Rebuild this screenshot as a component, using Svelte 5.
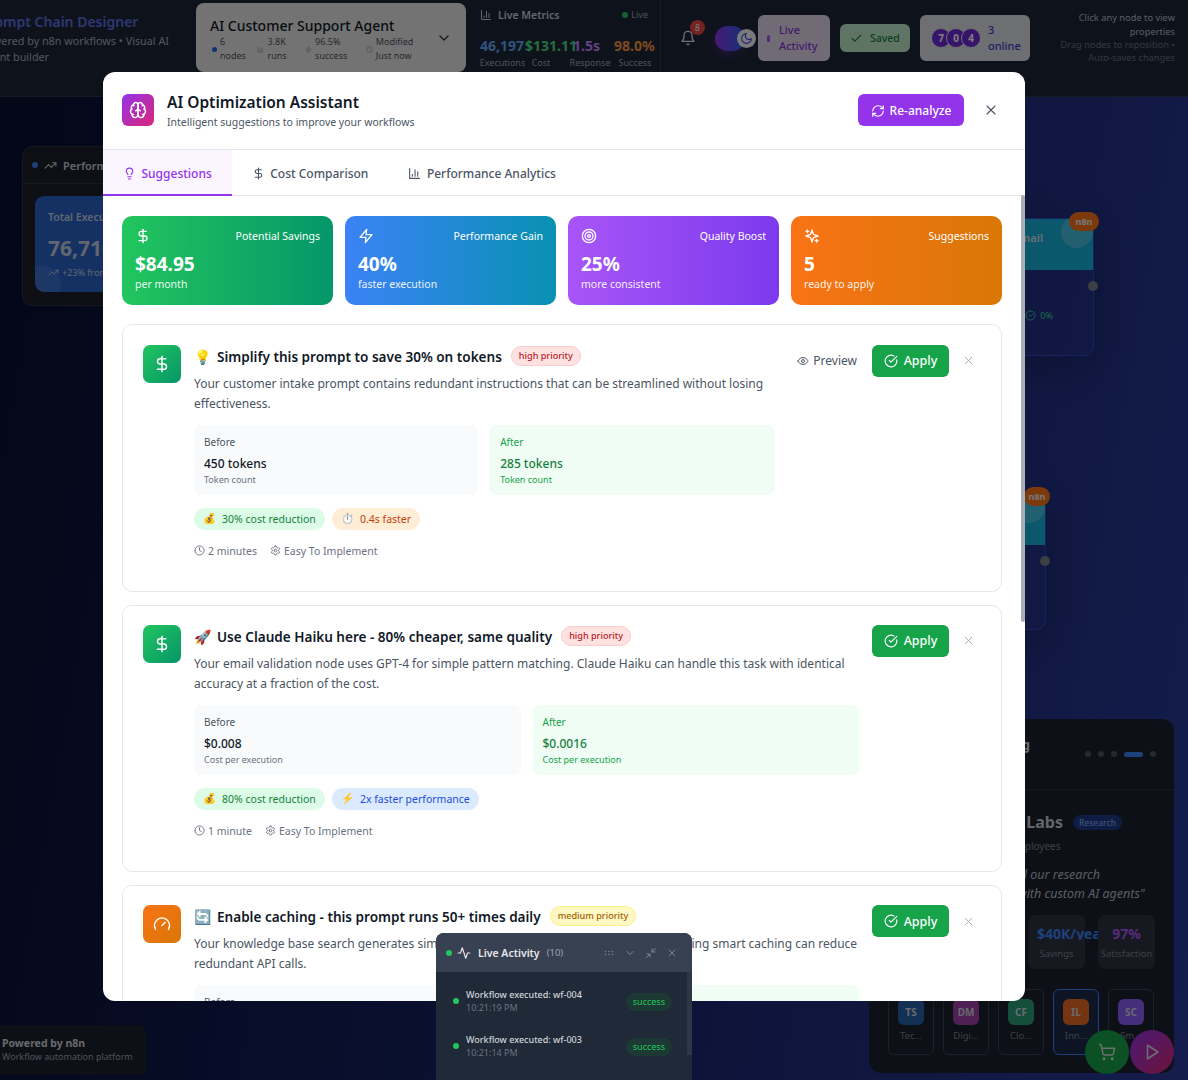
<script>
  const circle = (cx, cy, r) => `M${cx - r} ${cy}a${r} ${r} 0 1 0 ${r * 2} 0a${r} ${r} 0 1 0 ${-r * 2} 0`

  const icons = {
    brain: ['M12 5a3 3 0 1 0-5.997.125 4 4 0 0 0-2.526 5.77 4 4 0 0 0 .556 6.588A4 4 0 1 0 12 18Z', 'M12 5a3 3 0 1 1 5.997.125 4 4 0 0 1 2.526 5.77 4 4 0 0 1-.556 6.588A4 4 0 1 1 12 18Z', 'M15 13a4.5 4.5 0 0 1-3-4 4.5 4.5 0 0 1-3 4', 'M17.599 6.5a3 3 0 0 0 .399-1.375', 'M6.003 5.125A3 3 0 0 0 6.401 6.5', 'M3.477 10.896a4 4 0 0 1 .585-.396', 'M19.938 10.5a4 4 0 0 1 .585.396', 'M6 18a4 4 0 0 1-1.967-.516', 'M19.967 17.484A4 4 0 0 1 18 18'],
    bulb: ['M15 14c.2-1 .7-1.7 1.5-2.5 1-.9 1.5-2.2 1.5-3.5A6 6 0 0 0 6 8c0 1 .2 2.2 1.5 3.5.7.7 1.3 1.5 1.5 2.5', 'M9 18h6', 'M10 22h4'],
    dollar: ['M12 2v20', 'M17 5H9.5a3.5 3.5 0 0 0 0 7h5a3.5 3.5 0 0 1 0 7H6'],
    chart: ['M3 3v18h18', 'M18 17V9', 'M13 17V5', 'M8 17v-3'],
    refresh: ['M3 12a9 9 0 0 1 9-9 9.75 9.75 0 0 1 6.74 2.74L21 8', 'M21 3v5h-5', 'M21 12a9 9 0 0 1-9 9 9.75 9.75 0 0 1-6.74-2.74L3 16', 'M8 16H3v5'],
    x: ['M18 6 6 18', 'm6 6 12 12'],
    zap: ['M13 2 3 14h9l-1 8 10-12h-9l1-8z'],
    target: [circle(12, 12, 10), circle(12, 12, 6), circle(12, 12, 2)],
    sparkles: ['m12 3-1.912 5.813a2 2 0 0 1-1.275 1.275L3 12l5.813 1.912a2 2 0 0 1 1.275 1.275L12 21l1.912-5.813a2 2 0 0 1 1.275-1.275L21 12l-5.813-1.912a2 2 0 0 1-1.275-1.275L12 3Z', 'M5 3v4', 'M19 17v4', 'M3 5h4', 'M17 19h4'],
    eye: ['M2 12s3-7 10-7 10 7 10 7-3 7-10 7-10-7-10-7Z', circle(12, 12, 3)],
    checkCircle: ['M21.801 10A10 10 0 1 1 17 3.335', 'm9 11 3 3L22 4'],
    clock: [circle(12, 12, 10), 'M12 6v6l4 2'],
    gear: ['M12.22 2h-.44a2 2 0 0 0-2 2v.18a2 2 0 0 1-1 1.73l-.43.25a2 2 0 0 1-2 0l-.15-.08a2 2 0 0 0-2.73.73l-.22.38a2 2 0 0 0 .73 2.73l.15.1a2 2 0 0 1 1 1.72v.51a2 2 0 0 1-1 1.74l-.15.09a2 2 0 0 0-.73 2.73l.22.38a2 2 0 0 0 2.73.73l.15-.08a2 2 0 0 1 2 0l.43.25a2 2 0 0 1 1 1.73V20a2 2 0 0 0 2 2h.44a2 2 0 0 0 2-2v-.18a2 2 0 0 1 1-1.73l.43-.25a2 2 0 0 1 2 0l.15.08a2 2 0 0 0 2.73-.73l.22-.39a2 2 0 0 0-.73-2.73l-.15-.08a2 2 0 0 1-1-1.74v-.5a2 2 0 0 1 1-1.74l.15-.09a2 2 0 0 0 .73-2.73l-.22-.38a2 2 0 0 0-2.73-.73l-.15.08a2 2 0 0 1-2 0l-.43-.25a2 2 0 0 1-1-1.73V4a2 2 0 0 0-2-2z', circle(12, 12, 3)],
    gauge: ['m12 14 4-4', 'M3.34 19a10 10 0 1 1 17.32 0'],
    activity: ['M22 12h-4l-3 9L9 3l-3 9H2'],
    bell: ['M6 8a6 6 0 0 1 12 0c0 7 3 9 3 9H3s3-2 3-9', 'M10.3 21a1.94 1.94 0 0 0 3.4 0'],
    moon: ['M12 3a6 6 0 0 0 9 9 9 9 0 1 1-9-9Z'],
    check: ['M20 6 9 17l-5-5'],
    chevron: ['m6 9 6 6 6-6'],
    trending: ['M22 7l-8.5 8.5-5-5L2 17', 'M16 7h6v6'],
    cart: [circle(8, 21, 1), circle(19, 21, 1), 'M2.05 2.05h2l2.66 12.42a2 2 0 0 0 2 1.58h9.78a2 2 0 0 0 1.95-1.57l1.65-7.43H5.12'],
    play: ['M6 3l14 9-14 9z'],
    shrink: ['M4 14h6v6', 'M20 10h-6V4', 'm14 10 7-7', 'm3 21 7-7'],
    grip: ['M5 9h.01', 'M12 9h.01', 'M19 9h.01', 'M5 15h.01', 'M12 15h.01', 'M19 15h.01']
  }

  const summary = [
    { cls: 'green', icon: 'dollar', label: 'Potential Savings', value: '$84.95', sub: 'per month' },
    { cls: 'blue', icon: 'zap', label: 'Performance Gain', value: '40%', sub: 'faster execution' },
    { cls: 'purple', icon: 'target', label: 'Quality Boost', value: '25%', sub: 'more consistent' },
    { cls: 'orange', icon: 'sparkles', label: 'Suggestions', value: '5', sub: 'ready to apply' }
  ]

  const suggestions = [
    {
      icon: 'dollar', tone: 'green', emoji: '💡', title: 'Simplify this prompt to save 30% on tokens', priority: 'high',
      text: 'Your customer intake prompt contains redundant instructions that can be streamlined without losing effectiveness.',
      preview: true, before: '450 tokens', after: '285 tokens', note: 'Token count',
      tags: [{ cls: 'tg', emoji: '💰', text: '30% cost reduction' }, { cls: 'to', emoji: '⏱️', text: '0.4s faster' }],
      time: '2 minutes'
    },
    {
      icon: 'dollar', tone: 'green', emoji: '🚀', title: 'Use Claude Haiku here - 80% cheaper, same quality', priority: 'high',
      text: 'Your email validation node uses GPT-4 for simple pattern matching. Claude Haiku can handle this task with identical accuracy at a fraction of the cost.',
      before: '$0.008', after: '$0.0016', note: 'Cost per execution',
      tags: [{ cls: 'tg', emoji: '💰', text: '80% cost reduction' }, { cls: 'tb', emoji: '⚡', text: '2x faster performance' }],
      time: '1 minute'
    },
    {
      icon: 'gauge', tone: 'orange', emoji: '🔄', title: 'Enable caching - this prompt runs 50+ times daily', priority: 'medium',
      text: 'Your knowledge base search generates similar queries several times per day. Implementing smart caching can reduce redundant API calls.',
      before: '2.1s', after: '0.3s', note: 'Response time',
      tags: [{ cls: 'tg', emoji: '💰', text: '60% cost reduction' }, { cls: 'tb', emoji: '⚡', text: '7x faster' }],
      time: '5 minutes'
    }
  ]

  const metrics = [
    { value: '46,197', label: 'Executions', cls: 'm1' },
    { value: '$131.11', label: 'Cost', cls: 'm2' },
    { value: '1.5s', label: 'Response', cls: 'm3' },
    { value: '98.0%', label: 'Success', cls: 'm4' }
  ]

  const selectorStats = [
    { top: '6', bottom: 'nodes' },
    { top: '3.8K', bottom: 'runs', icon: 'chart' },
    { top: '96.5%', bottom: 'success', icon: 'zap' },
    { top: 'Modified', bottom: 'Just now', icon: 'clock' }
  ]

  const customers = [
    { short: 'TS', name: 'Tec...', cls: 'a1' },
    { short: 'DM', name: 'Digi...', cls: 'a2' },
    { short: 'CF', name: 'Clo...', cls: 'a3' },
    { short: 'IL', name: 'Inn...', cls: 'a4', active: true },
    { short: 'SC', name: 'Sm...', cls: 'a5' }
  ]
</script>

{#snippet icon(name, size = 16, sw = 2)}
  <svg class="ico" viewBox="0 0 24 24" width={size} height={size} fill="none" stroke="currentColor" stroke-width={sw} stroke-linecap="round" stroke-linejoin="round">
    {#each icons[name] as d}<path {d} />{/each}
  </svg>
{/snippet}

<div class="app">
  <header class="topbar">
    <div class="brand">
      <h1>Prompt Chain Designer</h1>
      <p>Powered by n8n workflows • Visual AI Agent builder</p>
    </div>
    <div class="selector">
      <div class="sel-main">
        <div class="sel-title">AI Customer Support Agent</div>
        <div class="sel-stats">
          {#each selectorStats as s}
            <div class="sel-stat">
              {#if s.icon}
                {@render icon(s.icon, 7)}
              {:else}
                <i class="sel-dot"></i>
              {/if}
              <span>{s.top}<br />{s.bottom}</span>
            </div>
          {/each}
        </div>
      </div>
      {@render icon('chevron', 16)}
    </div>
    <div class="live">
      <div class="live-head">
        <span class="live-title">{@render icon('chart', 12)} Live Metrics</span>
        <span class="live-flag"><i></i>Live</span>
      </div>
      <div class="metric-row">
        {#each metrics as m}
          <div class="metric {m.cls}">
            <b>{m.value}</b>
            <span>{m.label}</span>
          </div>
        {/each}
      </div>
    </div>
    <div class="tools">
      <div class="bell">{@render icon('bell', 16)}<em>8</em></div>
      <div class="toggle"><span class="knob">{@render icon('moon', 13)}</span></div>
      <div class="tool-btn activity-btn"><i></i><span>Live<br />Activity</span></div>
      <div class="tool-btn saved">{@render icon('check', 13)}<span>Saved</span></div>
      <div class="tool-btn online">
        <div class="faces"><i>7</i><i>0</i><i>4</i></div>
        <span>3<br />online</span>
      </div>
    </div>
    <div class="hint">
      <p>Click any node to view properties</p>
      <p class="dim">Drag nodes to reposition • Auto-saves changes</p>
    </div>
  </header>

  <main class="canvas">
    <section class="perf">
      <div class="perf-head"><i></i>{@render icon('trending', 13)}<span>Performance Overview</span></div>
      <div class="perf-card">
        <div class="perf-label">Total Executions</div>
        <div class="perf-value">76,716</div>
        <div class="perf-foot">{@render icon('trending', 11)}+23% from last month</div>
        <span class="perf-glow"></span>
      </div>
    </section>

    <div class="node node-a">
      <div class="node-top"><span class="bubble"></span><span class="node-name">Send Email</span></div>
      <span class="badge">n8n</span>
      <span class="port"></span>
      <div class="node-stat">{@render icon('checkCircle', 11)} 0%</div>
    </div>
    <div class="node node-b">
      <div class="node-top"><span class="bubble"></span></div>
      <span class="badge">n8n</span>
      <span class="port"></span>
    </div>

    <section class="stories">
      <div class="stories-head">
        <h3>Customer Training</h3>
        <div class="pager"><i></i><i></i><i></i><i class="on"></i><i></i></div>
      </div>
      <div class="stories-body">
        <div class="story-name"><b>Innovation Labs</b><span>Research</span></div>
        <div class="story-size">500 employees</div>
        <p class="quote">"Automated all our research<br />and analysis with custom AI agents"</p>
        <div class="story-stats">
          <div><b class="sb">$40K/year</b><span>Savings</span></div>
          <div><b class="sp">97%</b><span>Satisfaction</span></div>
        </div>
        <div class="avatars">
          {#each customers as c}
            <div class="cust" class:active={c.active}>
              <i class={c.cls}>{c.short}</i>
              <span>{c.name}</span>
            </div>
          {/each}
        </div>
      </div>
    </section>

    <div class="powered"><b>Powered by n8n</b><span>Workflow automation platform</span></div>
    <div class="fabs">
      <div class="fab fab-green">{@render icon('cart', 18)}</div>
      <div class="fab fab-purple">{@render icon('play', 18)}</div>
    </div>
  </main>

  <div class="backdrop"></div>

  <div class="modal">
    <div class="m-head">
      <div class="m-logo">{@render icon('brain', 18)}</div>
      <div class="m-titles">
        <h2>AI Optimization Assistant</h2>
        <p>Intelligent suggestions to improve your workflows</p>
      </div>
      <button class="reanalyze">{@render icon('refresh', 14)}<span>Re-analyze</span></button>
      <button class="m-close">{@render icon('x', 16, 1.6)}</button>
    </div>
    <nav class="tabs">
      <div class="tab active">{@render icon('bulb', 13)}<span>Suggestions</span></div>
      <div class="tab">{@render icon('dollar', 13)}<span>Cost Comparison</span></div>
      <div class="tab">{@render icon('chart', 13)}<span>Performance Analytics</span></div>
    </nav>
    <div class="m-body">
      <div class="summary">
        {#each summary as s}
          <div class="sum {s.cls}">
            <div class="sum-top">{@render icon(s.icon, 16)}<span>{s.label}</span></div>
            <div class="sum-value">{s.value}</div>
            <div class="sum-sub">{s.sub}</div>
          </div>
        {/each}
      </div>

      <div class="cards">
        {#each suggestions as s}
          <article class="card">
            <div class="card-icon {s.tone}">{@render icon(s.icon, 18)}</div>
            <div class="card-main">
              <div class="card-title">
                <span class="emoji">{s.emoji}</span>
                <h4>{s.title}</h4>
                <span class="prio {s.priority}">{s.priority} priority</span>
              </div>
              <p class="card-text">{s.text}</p>
              <div class="compare">
                <div class="cmp before">
                  <span class="cmp-label">Before</span>
                  <span class="cmp-value">{s.before}</span>
                  <span class="cmp-note">{s.note}</span>
                </div>
                <div class="cmp after">
                  <span class="cmp-label">After</span>
                  <span class="cmp-value">{s.after}</span>
                  <span class="cmp-note">{s.note}</span>
                </div>
              </div>
              <div class="tags">
                {#each s.tags as t}
                  <span class="tag {t.cls}"><span class="emoji">{t.emoji}</span>{t.text}</span>
                {/each}
              </div>
              <div class="meta">
                <span>{@render icon('clock', 11)}{s.time}</span>
                <span>{@render icon('gear', 11)}Easy To Implement</span>
              </div>
            </div>
            <div class="card-actions">
              {#if s.preview}
                <button class="preview">{@render icon('eye', 12)}<span>Preview</span></button>
              {/if}
              <button class="apply">{@render icon('checkCircle', 14)}<span>Apply</span></button>
              <button class="dismiss">{@render icon('x', 13, 1.6)}</button>
            </div>
          </article>
        {/each}
      </div>
    </div>
    <span class="thumb"></span>
  </div>

  <aside class="feed">
    <div class="feed-head">
      <i class="dot"></i>
      {@render icon('activity', 14)}
      <b>Live Activity</b>
      <span class="count">(10)</span>
      <div class="feed-tools">
        {@render icon('grip', 12, 3)}
        {@render icon('chevron', 12)}
        {@render icon('shrink', 12)}
        {@render icon('x', 12)}
      </div>
    </div>
    <div class="feed-body">
      <div class="feed-row">
        <i class="dot"></i>
        <div class="feed-text"><span>Workflow executed: wf-004</span><small>10:21:19 PM</small></div>
        <em>success</em>
      </div>
      <div class="feed-row">
        <i class="dot"></i>
        <div class="feed-text"><span>Workflow executed: wf-003</span><small>10:21:14 PM</small></div>
        <em>success</em>
      </div>
    </div>
  </aside>
</div>

<style>
  :global(body) {
    margin: 0;
    background: #08143c;
  }

  .app {
    position: relative;
    width: 1188px;
    height: 1080px;
    overflow: hidden;
    display: flex;
    flex-direction: column;
    font-family: "Noto Sans", "Noto Color Emoji", sans-serif;
    color: #111827;
  }

  .ico {
    flex: none;
    display: block;
  }

  p, h1, h2, h3, h4 {
    margin: 0;
  }

  button {
    font: inherit;
    border: none;
    background: none;
    padding: 0;
  }

  i, em {
    font-style: normal;
  }

  /* top bar, under the backdrop */
  .topbar {
    flex: none;
    height: 97px;
    box-sizing: border-box;
    display: flex;
    align-items: flex-start;
    background: #1c2636;
    border-bottom: 1px solid #2c3648;
  }

  .brand {
    flex: none;
    width: 216px;
    margin-left: -20px;
    padding-top: 12px;
  }

  .brand h1 {
    font-size: 14px;
    font-weight: 600;
    line-height: 20px;
    white-space: nowrap;
    color: #5d6ee0;
  }

  .brand p {
    width: 195px;
    margin-top: 1px;
    font-size: 10.8px;
    line-height: 16px;
    color: #a8afbb;
  }

  .selector {
    flex: none;
    width: 270px;
    height: 69px;
    margin-top: 3px;
    box-sizing: border-box;
    padding: 14px 14px 0;
    display: flex;
    align-items: flex-start;
    justify-content: space-between;
    border-radius: 8px;
    background: #e7e7e7;
    color: #3a3f48;
  }

  .selector > .ico {
    margin-top: 13px;
    color: #333;
  }

  .sel-title {
    font-size: 14px;
    font-weight: 500;
    line-height: 18px;
    color: #111827;
  }

  .sel-stats {
    display: flex;
    gap: 18.5px;
  }

  .sel-stat:first-child {
    margin-right: -7px;
    margin-left: 2px;
  }

  .sel-stat {
    display: flex;
    align-items: center;
    gap: 3px;
    font-size: 9px;
    line-height: 14px;
    color: #4b5563;
  }

  .sel-stat .ico {
    color: #8b929c;
  }

  .sel-dot {
    width: 5px;
    height: 5px;
    border-radius: 50%;
    background: #2563eb;
  }

  .live {
    flex: none;
    width: 195px;
    height: 72px;
    box-sizing: border-box;
    padding: 7px 4px 0 14px;
    border-right: 1px solid #2c3648;
  }

  .live-head {
    display: flex;
    justify-content: space-between;
    align-items: center;
    height: 15px;
    color: #c7cdd6;
  }

  .live-title {
    display: flex;
    align-items: center;
    gap: 6px;
    font-size: 10.5px;
    font-weight: 600;
  }

  .live-flag {
    display: flex;
    align-items: center;
    gap: 3px;
    margin-right: 8px;
    font-size: 9px;
    color: #9ca3af;
  }

  .live-flag i {
    width: 6px;
    height: 6px;
    border-radius: 50%;
    background: #22c55e;
  }

  .metric-row {
    display: flex;
    margin-top: 15px;
  }

  .metric {
    display: flex;
    flex-direction: column;
    align-items: center;
  }

  .metric b {
    font-size: 14px;
    font-weight: 700;
    line-height: 18px;
    white-space: nowrap;
    align-self: flex-start;
  }

  .metric span {
    margin-top: 2px;
    font-size: 9px;
    line-height: 12px;
    color: #9ca3af;
  }

  .m1 { width: 45px; }
  .m1 b { color: #60a5fa; }
  .m2 { width: 32px; }
  .m2 b { color: #4ade80; }
  .m3 { width: 40px; margin-left: 13px; }
  .m3 b { color: #c084fc; margin-left: 3px; }
  .m4 { width: 42px; margin-left: 4px; }
  .m4 b { color: #fb923c; }

  .tools {
    flex: none;
    display: flex;
    align-items: center;
    height: 46px;
    margin-top: 15px;
    margin-left: 19px;
  }

  .bell {
    position: relative;
    color: #e5e7eb;
    margin-right: 19px;
  }

  .bell em {
    position: absolute;
    top: -10px;
    left: 10px;
    width: 15px;
    height: 15px;
    border-radius: 50%;
    background: #ef4444;
    color: #f3f4f6;
    font-size: 8.5px;
    line-height: 15px;
    text-align: center;
  }

  .toggle {
    position: relative;
    width: 30px;
    height: 25px;
    border-radius: 13px;
    background: linear-gradient(90deg, #9333ea, #2563eb);
    box-shadow: 0 4px 8px rgba(147, 51, 234, 0.3);
    margin-right: 13px;
  }

  .knob {
    position: absolute;
    top: 3px;
    left: 22px;
    width: 19px;
    height: 19px;
    border-radius: 50%;
    display: flex;
    align-items: center;
    justify-content: center;
    background: #f3f4f6;
    color: #4f46e5;
  }

  .tool-btn {
    display: flex;
    align-items: center;
    box-sizing: border-box;
    border-radius: 6px;
    font-size: 11px;
    line-height: 16px;
    font-weight: 500;
  }

  .activity-btn {
    width: 72px;
    height: 46px;
    padding-left: 9px;
    gap: 9px;
    background: #e0d7ea;
    color: #8b35d6;
    margin-right: 10px;
  }

  .activity-btn i {
    width: 3px;
    height: 7px;
    border-radius: 2px;
    background: #a855f7;
  }

  .saved {
    width: 70px;
    height: 28px;
    padding-left: 10px;
    gap: 7px;
    background: #bfe8cb;
    color: #15803d;
    font-size: 10.5px;
    margin-right: 10px;
  }

  .online {
    width: 110px;
    height: 46px;
    padding-left: 11px;
    gap: 7px;
    background: #dcdfe6;
    color: #4338ca;
  }

  .faces {
    display: flex;
  }

  .faces i {
    width: 20px;
    height: 20px;
    margin-right: -5px;
    border-radius: 50%;
    background: #6d28d9;
    border: 1px solid #ddd;
    box-sizing: border-box;
    color: #fff;
    font-size: 10px;
    font-weight: 700;
    line-height: 18px;
    text-align: center;
  }

  .faces i:last-child {
    margin-right: 0;
  }

  .hint {
    flex: 1;
    padding: 11px 13px 0 25px;
    text-align: right;
    font-size: 9.3px;
    line-height: 14px;
    color: #b5bcc7;
  }

  .hint .dim {
    line-height: 12.5px;
    color: #6b7280;
  }

  /* workflow canvas, under the backdrop */
  .canvas {
    flex: 1;
    position: relative;
    background: linear-gradient(100deg, #060e2e 0%, #162266 50%, #283a98 100%);
  }

  .perf {
    position: absolute;
    left: 22px;
    top: 49px;
    width: 320px;
    height: 160px;
    box-sizing: border-box;
    border: 1px solid #2a313f;
    border-radius: 10px;
    background: #1a1f2b;
  }

  .perf-head {
    display: flex;
    align-items: center;
    gap: 6px;
    height: 36px;
    padding-left: 9px;
    border-bottom: 1px solid #2c3340;
    font-size: 11px;
    font-weight: 600;
    color: #c7cdd6;
  }

  .perf-head i {
    width: 6px;
    height: 6px;
    border-radius: 50%;
    background: #3b82f6;
  }

  .perf-card {
    position: relative;
    overflow: hidden;
    margin: 12px;
    height: 96px;
    box-sizing: border-box;
    padding: 14px 13px;
    border-radius: 9px;
    background: #2a62c8;
    color: #c3cddc;
  }

  .perf-glow {
    position: absolute;
    left: -12px;
    bottom: -12px;
    width: 38px;
    height: 38px;
    border-radius: 50%;
    background: rgba(255, 255, 255, 0.08);
  }

  .perf-label {
    font-size: 10.5px;
    font-weight: 600;
  }

  .perf-value {
    margin-top: 10px;
    font-size: 21px;
    line-height: 28px;
    font-weight: 700;
  }

  .perf-foot {
    display: flex;
    align-items: center;
    gap: 3px;
    margin-top: 4px;
    font-size: 9px;
  }

  .node {
    position: absolute;
    box-sizing: border-box;
    border: 1px solid #2a48c0;
    border-radius: 10px;
    box-shadow: 0 10px 40px rgba(0, 0, 0, 0.25);
    width: 234px;
  }

  .node-a {
    left: 860px;
    top: 121px;
    height: 138px;
  }

  .node-b {
    left: 812px;
    top: 396px;
    height: 137px;
  }

  .node-top {
    position: relative;
    height: 51px;
    overflow: hidden;
    background: #16b0d8;
    border-radius: 10px 0 0 0;
  }

  .node-name {
    position: absolute;
    right: 50px;
    top: 11px;
    font-size: 11px;
    font-weight: 600;
    color: #d8dee6;
  }

  .bubble {
    position: absolute;
    right: 0;
    top: -3px;
    width: 32px;
    height: 32px;
    border-radius: 50%;
    background: rgba(255, 255, 255, 0.2);
  }

  .badge {
    position: absolute;
    right: -6px;
    top: -7px;
    width: 30px;
    height: 19px;
    border-radius: 10px;
    background: #f97316;
    color: #eee;
    font-size: 9px;
    font-weight: 700;
    line-height: 19px;
    text-align: center;
  }

  .node-b .badge {
    width: 26px;
    right: -5px;
  }

  .port {
    position: absolute;
    right: -5px;
    top: 62px;
    width: 10px;
    height: 10px;
    border-radius: 50%;
    background: #777c86;
  }

  .node-stat {
    position: absolute;
    right: 40px;
    top: 90px;
    display: flex;
    align-items: center;
    gap: 4px;
    font-size: 9px;
    color: #34d399;
  }

  .stories {
    position: absolute;
    left: 869px;
    top: 622px;
    width: 305px;
    height: 354px;
    border-radius: 12px;
    background: #1a202c;
    color: #b5bcc7;
  }

  .stories-head {
    display: flex;
    align-items: center;
    justify-content: space-between;
    height: 70px;
    padding: 0 18px;
    border-bottom: 1px solid #2c3340;
  }

  .stories-head h3 {
    font-size: 14px;
    color: #d1d5db;
    margin-bottom: 20px;
    margin-left: 14px;
  }

  .pager {
    display: flex;
    align-items: center;
    gap: 7px;
  }

  .pager i {
    width: 6px;
    height: 6px;
    border-radius: 50%;
    background: #4b5563;
  }

  .pager i.on {
    width: 19px;
    height: 5px;
    border-radius: 3px;
    background: #3b82f6;
  }

  .stories-body {
    padding: 21px 19px 0;
  }

  .story-name {
    display: flex;
    align-items: center;
    justify-content: flex-end;
    gap: 10px;
    padding-right: 33px;
  }

  .story-name b {
    font-size: 16px;
    color: #c7cdd6;
  }

  .story-name span {
    padding: 2px 6px;
    border-radius: 10px;
    background: #1e3a8a;
    color: #7d9fe8;
    font-size: 8.5px;
    font-weight: 500;
  }

  .story-size {
    margin: 6px 0 0 102px;
    font-size: 10px;
    color: #7b828e;
  }

  .quote {
    margin: 12px 0 0 57px;
    font-size: 12.5px;
    line-height: 19px;
    font-style: italic;
    white-space: nowrap;
  }

  .story-stats {
    display: flex;
    justify-content: flex-end;
    gap: 13px;
    margin-top: 12px;
  }

  .story-stats div {
    width: 57px;
    height: 54px;
    box-sizing: border-box;
    padding-top: 12px;
    border-radius: 7px;
    background: #2c3340;
    text-align: center;
    white-space: nowrap;
  }

  .story-stats b {
    display: block;
    font-size: 14px;
    line-height: 13px;
  }

  .sb { color: #3b82f6; text-align: left; margin-left: 9px; overflow: hidden; width: 61px; }
  .sp { color: #a855f7; }

  .story-stats span {
    font-size: 9.5px;
    color: #7b828e;
  }

  .avatars {
    display: flex;
    gap: 9px;
    margin-top: 20px;
  }

  .cust {
    width: 46px;
    height: 66px;
    box-sizing: border-box;
    padding-top: 9px;
    border: 1px solid #3a4150;
    border-radius: 6px;
    text-align: center;
    font-size: 9.5px;
    color: #7b828e;
  }

  .cust.active {
    border-color: #3b82f6;
    background: #1a2a4a;
  }

  .cust i {
    display: block;
    width: 26px;
    height: 26px;
    margin: 0 auto 4px;
    border-radius: 6px;
    color: #d1d5db;
    font-size: 10px;
    font-weight: 700;
    line-height: 26px;
  }

  .a1 { background: #2563a8; }
  .a2 { background: #a03fa8; }
  .a3 { background: #2d9d78; }
  .a4 { background: #ea6a24; }
  .a5 { background: #8b5cf6; }

  .powered {
    position: absolute;
    left: 0;
    top: 928px;
    width: 146px;
    height: 50px;
    box-sizing: border-box;
    padding: 11px 0 0 2px;
    border-radius: 0 8px 8px 0;
    background: #1a202c;
    display: flex;
    flex-direction: column;
    font-size: 9px;
    line-height: 14px;
    color: #9ca3af;
  }

  .powered b {
    font-size: 10.5px;
    color: #d1d5db;
  }

  .fabs {
    position: absolute;
    left: 1085px;
    top: 933px;
    display: flex;
    gap: 1px;
  }

  .fab {
    width: 44px;
    height: 44px;
    border-radius: 50%;
    display: flex;
    align-items: center;
    justify-content: center;
    color: #ddd;
  }

  .fab-green {
    background: #16a34a;
  }

  .fab-purple {
    background: linear-gradient(135deg, #9333ea, #db2777);
  }

  .backdrop {
    position: absolute;
    inset: 0;
    background: rgba(0, 0, 0, 0.5);
  }

  /* modal */
  .modal {
    position: absolute;
    left: 103px;
    top: 72px;
    width: 922px;
    height: 929px;
    display: flex;
    flex-direction: column;
    overflow: hidden;
    border-radius: 12px;
    background: #fff;
  }

  .m-head {
    flex: none;
    height: 78px;
    box-sizing: border-box;
    padding: 22px 26px 0 19px;
    display: flex;
    align-items: flex-start;
    border-bottom: 1px solid #e5e7eb;
  }

  .m-logo {
    width: 32px;
    height: 32px;
    border-radius: 6px;
    display: flex;
    align-items: center;
    justify-content: center;
    color: #fff;
    background: linear-gradient(135deg, #9333ea, #db2777);
  }

  .m-titles {
    flex: 1;
    margin-left: 13px;
  }

  .m-titles h2 {
    font-size: 15.5px;
    font-weight: 600;
    line-height: 17px;
    color: #111827;
  }

  .m-titles p {
    margin-top: 3px;
    font-size: 10.5px;
    line-height: 16px;
    color: #4b5563;
  }

  .reanalyze {
    width: 106px;
    height: 32px;
    display: flex;
    align-items: center;
    justify-content: center;
    gap: 5px;
    padding-top: 1px;
    border-radius: 6px;
    background: #9333ea;
    color: #fff;
    font-size: 12px;
    font-weight: 500;
  }

  .m-close {
    margin: 8px 0 0 19px;
    color: #4b5563;
  }

  .tabs {
    flex: none;
    display: flex;
    height: 46px;
    box-sizing: border-box;
    border-bottom: 1px solid #e5e7eb;
  }

  .tab {
    display: flex;
    align-items: center;
    gap: 5.5px;
    padding: 2px 20px 0;
    font-size: 12px;
    font-weight: 500;
    color: #4b5563;
  }

  .tab.active {
    color: #9333ea;
    background: #faf5ff;
    border-bottom: 2px solid #9333ea;
    margin-bottom: -1px;
  }

  .m-body {
    flex: 1;
    min-height: 0;
    overflow: hidden;
    padding: 20px 23px 0 19px;
  }

  .thumb {
    position: absolute;
    right: 0;
    top: 123px;
    width: 4px;
    height: 427px;
    border-radius: 2px;
    background: #a8afb6;
  }

  .summary {
    display: grid;
    grid-template-columns: repeat(4, 211px);
    gap: 12px;
  }

  .sum {
    height: 89px;
    box-sizing: border-box;
    padding: 12px 13px;
    border-radius: 10px;
    color: #fff;
  }

  .sum.green { background: linear-gradient(90deg, #22c55e, #059669); }
  .sum.blue { background: linear-gradient(90deg, #3b82f6, #0891b2); }
  .sum.purple { background: linear-gradient(90deg, #a855f7, #7c3aed); }
  .sum.orange { background: linear-gradient(90deg, #f97316, #d97706); }

  .sum-top {
    display: flex;
    align-items: center;
    justify-content: space-between;
    font-size: 10.5px;
    line-height: 16px;
  }

  .sum-value {
    margin-top: 8px;
    font-size: 19px;
    font-weight: 700;
    line-height: 25px;
  }

  .sum-sub {
    font-size: 10.5px;
    line-height: 14px;
    opacity: 0.9;
  }

  .cards {
    display: flex;
    flex-direction: column;
    gap: 13px;
    margin-top: 19.2px;
  }

  .card {
    display: flex;
    align-items: flex-start;
    gap: 13px;
    padding: 19.4px 20px 33px;
    border: 1px solid #e5e7eb;
    border-radius: 10px;
    background: #fff;
  }

  .card-icon {
    flex: none;
    width: 38px;
    height: 38px;
    border-radius: 7px;
    display: flex;
    align-items: center;
    justify-content: center;
    color: #fff;
  }

  .card-icon.green { background: linear-gradient(135deg, #22c55e, #059669); }
  .card-icon.orange { background: linear-gradient(135deg, #f97316, #d97706); }

  .card-main {
    flex: 1;
    min-width: 0;
  }

  .card-title {
    display: flex;
    align-items: center;
    height: 22px;
    box-sizing: border-box;
    padding-top: 2px;
  }

  .emoji {
    font-family: "Noto Color Emoji", sans-serif;
    font-weight: 400;
  }

  .card-title .emoji {
    font-size: 14px;
    width: 23px;
  }

  .card-title h4 {
    font-size: 13.55px;
    font-weight: 600;
    color: #111827;
    white-space: nowrap;
  }

  .prio {
    margin-left: 9px;
    height: 20px;
    box-sizing: border-box;
    padding: 0 7px;
    margin-top: -2px;
    border-radius: 10px;
    border: 1px solid;
    font-size: 9.1px;
    font-weight: 500;
    line-height: 17px;
  }

  .prio.high { background: #fee2e2; color: #b91c1c; border-color: #fecaca; }
  .prio.medium { background: #fef9c3; color: #a16207; border-color: #fef08a; }

  .card-text {
    margin-top: 7px;
    font-size: 12px;
    line-height: 20px;
    color: #4b5563;
  }

  .compare {
    display: grid;
    grid-template-columns: 1fr 1fr;
    gap: 12px;
    margin-top: 11px;
  }

  .cmp {
    height: 70px;
    box-sizing: border-box;
    padding: 10px;
    border-radius: 7px;
    display: flex;
    flex-direction: column;
  }

  .before { background: #f9fafb; color: #111827; }
  .after { background: #f0fdf4; color: #15803d; }

  .cmp-label {
    font-size: 10px;
    line-height: 15px;
    color: #4b5563;
  }

  .after .cmp-label {
    color: #16a34a;
  }

  .cmp-value {
    margin-top: 6px;
    font-size: 12px;
    font-weight: 500;
    line-height: 16px;
  }

  .cmp-note {
    margin-top: 1px;
    font-size: 9px;
    line-height: 14px;
    color: #6b7280;
  }

  .after .cmp-note {
    color: #16a34a;
  }

  .tags {
    display: flex;
    gap: 7px;
    margin-top: 13px;
  }

  .tag {
    display: flex;
    align-items: center;
    gap: 6px;
    height: 22px;
    padding: 0 9px;
    border-radius: 11px;
    font-size: 10.5px;
  }

  .tg { background: #dcfce7; color: #15803d; }
  .to { background: #ffedd5; color: #c2410c; }
  .tb { background: #dbeafe; color: #1d4ed8; }

  .meta {
    display: flex;
    gap: 13px;
    margin-top: 14px;
    font-size: 10.5px;
    line-height: 14px;
    color: #6b7280;
  }

  .meta span {
    display: flex;
    align-items: center;
    gap: 3px;
  }

  .card-actions {
    flex: none;
    display: flex;
    align-items: center;
    height: 32px;
  }

  .preview {
    display: flex;
    align-items: center;
    gap: 4px;
    padding: 0 15px 0 10px;
    font-size: 12px;
    color: #4b5563;
  }

  .apply {
    display: flex;
    align-items: center;
    justify-content: center;
    gap: 6px;
    width: 77px;
    height: 32px;
    border-radius: 6px;
    background: #16a34a;
    color: #fff;
    font-size: 12.5px;
    font-weight: 500;
  }

  .dismiss {
    width: 13px;
    margin-left: 13px;
    margin-right: 6px;
    color: #9ca3af;
  }

  /* floating feed */
  .feed {
    position: absolute;
    left: 436px;
    top: 933px;
    width: 256px;
    height: 160px;
    border-radius: 8px 8px 0 0;
    overflow: hidden;
    background: #1f2937;
  }

  .feed-head {
    display: flex;
    align-items: center;
    gap: 5px;
    height: 39px;
    padding: 0 14px 0 10px;
    background: #374151;
    color: #e5e7eb;
    font-size: 10.5px;
  }

  .feed-head b {
    font-weight: 600;
    margin-left: 2px;
  }

  .dot {
    flex: none;
    width: 6px;
    height: 6px;
    border-radius: 50%;
    background: #22c55e;
  }

  .count {
    margin-left: 2px;
    color: #9ca3af;
    font-size: 9.5px;
  }

  .feed-tools {
    margin-left: auto;
    display: flex;
    gap: 9px;
    color: #7d8694;
  }

  .feed-body {
    padding: 6px 0 0 17px;
    border-right: 5px solid #2d3746;
    height: 77px;
  }

  .feed-row {
    display: flex;
    align-items: center;
    height: 45px;
    gap: 7px;
  }

  .feed-text {
    flex: 1;
    display: flex;
    flex-direction: column;
  }

  .feed-text span {
    font-size: 9px;
    font-weight: 500;
    line-height: 13px;
    color: #d1d5db;
  }

  .feed-text small {
    font-size: 9px;
    line-height: 13px;
    color: #6b7280;
  }

  .feed-row em {
    height: 18px;
    padding: 0 7px;
    margin-right: 15px;
    margin-top: 2px;
    border-radius: 9px;
    background: #1c3a33;
    color: #22c55e;
    font-size: 9px;
    line-height: 18px;
  }
</style>
